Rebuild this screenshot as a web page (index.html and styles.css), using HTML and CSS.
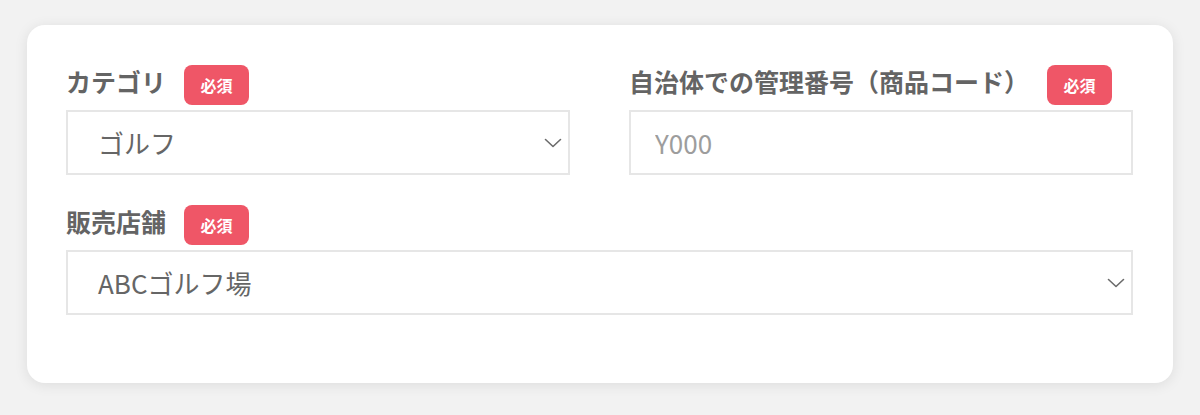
FILE: index.html
```html
<!DOCTYPE html>
<html lang="ja">
<head>
<meta charset="utf-8">
<link rel="stylesheet" href="styles.css">
</head>
<body>
<div class="card">
  <div class="grid">
    <div class="field">
      <div class="label-row">
        <span class="label">カテゴリ</span>
        <span class="badge">必須</span>
      </div>
      <div class="control select">
        <span class="value">ゴルフ</span>
        <svg class="chev" width="18" height="10" viewBox="0 0 18 10"><path d="M1.5 1.5 L9 8.5 L16.5 1.5" fill="none" stroke="#6b6b6b" stroke-width="1.6" stroke-linecap="round" stroke-linejoin="round"/></svg>
      </div>
    </div>
    <div class="field">
      <div class="label-row">
        <span class="label">自治体での管理番号（商品コード）</span>
        <span class="badge">必須</span>
      </div>
      <input class="control input" type="text" placeholder="Y000">
    </div>
    <div class="field wide">
      <div class="label-row">
        <span class="label">販売店舗</span>
        <span class="badge">必須</span>
      </div>
      <div class="control select">
        <span class="value">ABCゴルフ場</span>
        <svg class="chev" width="18" height="10" viewBox="0 0 18 10"><path d="M1.5 1.5 L9 8.5 L16.5 1.5" fill="none" stroke="#6b6b6b" stroke-width="1.6" stroke-linecap="round" stroke-linejoin="round"/></svg>
      </div>
    </div>
  </div>
</div>
</body>
</html>
```
FILE: styles.css
```css
* { box-sizing: border-box; }
html, body { margin: 0; }
body {
  background: #f2f2f2;
  padding: 25px 27px;
  font-family: "Noto Sans CJK JP", "Noto Sans", sans-serif;
}
.card {
  background: #fff;
  border-radius: 18px;
  box-shadow: 0 2px 14px rgba(0, 0, 0, 0.09);
  padding: 40px 40px 68px 39px;
  height: 358px;
}
.grid {
  display: grid;
  grid-template-columns: 504px 504px;
  column-gap: 59px;
  row-gap: 30px;
}
.wide { grid-column: 1 / 3; }
.label-row {
  display: flex;
  align-items: center;
  height: 40px;
  margin-bottom: 5px;
}
.label {
  font-size: 25px;
  font-weight: 700;
  color: #646464;
  line-height: 1;
  margin-top: -8px;
}
.badge {
  margin-left: 18px;
  height: 40px;
  width: 65px;
  border-radius: 8px;
  background: #ef5667;
  color: #fff;
  font-size: 16px;
  font-weight: 700;
  display: flex;
  align-items: center;
  justify-content: center;
}
.control {
  height: 65px;
  border: 2px solid #e6e6e6;
  background: #fff;
  font-family: inherit;
  font-size: 26px;
  color: #666;
}
.select {
  display: flex;
  align-items: center;
  justify-content: space-between;
  padding: 0 6px 0 30px;
}
.value { line-height: 1; }
.input {
  display: block;
  width: 100%;
  padding: 0 24px;
  outline: none;
}
.input::placeholder { color: #9d9d9d; }
.chev { display: block; }
```
